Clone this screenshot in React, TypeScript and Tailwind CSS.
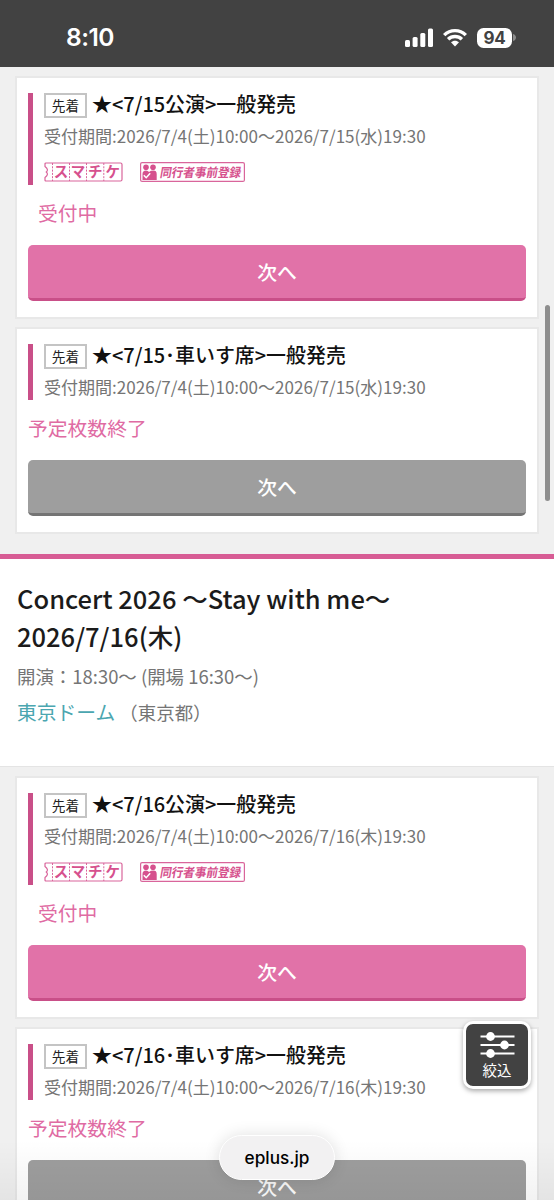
import React from "react";

type Sale = { title: string; period: string; open: boolean };

const july15: Sale[] = [
  { title: "★<7/15公演>一般発売", period: "受付期間:2026/7/4(土)10:00〜2026/7/15(水)19:30", open: true },
  { title: "★<7/15･車いす席>一般発売", period: "受付期間:2026/7/4(土)10:00〜2026/7/15(水)19:30", open: false },
];
const july16: Sale[] = [
  { title: "★<7/16公演>一般発売", period: "受付期間:2026/7/4(土)10:00〜2026/7/16(木)19:30", open: true },
  { title: "★<7/16･車いす席>一般発売", period: "受付期間:2026/7/4(土)10:00〜2026/7/16(木)19:30", open: false },
];

function StatusBar() {
  return (
    <header className="flex h-[67px] shrink-0 items-start justify-between bg-[#424242] pl-[66px] pr-[38px] pt-[24px] font-['Inter',sans-serif] text-white">
      <span className="text-[24.5px] font-semibold leading-[27px] tracking-[-0.5px]">8:10</span>
      <div className="flex h-[27px] items-center">
        <svg className="mr-[10px] h-[19px] w-[28px]" viewBox="0 0 28 19" fill="currentColor">
          <rect x="0" y="12" width="5" height="7" rx="1.5" />
          <rect x="7.6" y="9" width="5" height="10" rx="1.5" />
          <rect x="15.3" y="5" width="5" height="14" rx="1.5" />
          <rect x="23" y="0.5" width="5" height="18.5" rx="1.5" />
        </svg>
        <svg className="mr-[10px] h-[19px] w-[24px]" viewBox="0 0 24 19" fill="none" stroke="currentColor" strokeWidth="3.4">
          <path d="M1.2 7.1C7.2 1.1 16.8 1.1 22.8 7.1" />
          <path d="M5.1 11.3C9 7.5 15 7.5 18.9 11.3" />
          <path d="M8 14.2C10.2 12.1 13.8 12.1 16 14.2L12 18.4Z" fill="currentColor" stroke="none" />
        </svg>
        <span className="flex h-[20px] w-[35px] items-center justify-center rounded-[6.5px] bg-white text-[17px] font-bold leading-[20px] tracking-[-0.3px] text-[#424242]">94</span>
        <svg className="ml-[1px] h-[7px] w-[3px]" viewBox="0 0 3 7" fill="#8c8c8c"><path d="M0 0C4 1 4 6 0 7Z" /></svg>
      </div>
    </header>
  );
}

function TicketBadge() {
  return (
    <svg className="h-[20px] w-[79px] overflow-visible" viewBox="0 0 79 20" fill="none" stroke="#d9659b">
      <path d="M2 1H76.5Q78 1 78 2.5V17.5Q78 19 76.5 19H2Q1 19 1 18V15.5C4 13 4 11.5 2.3 10C4 8.5 4 7 1 4.5V2Q1 1 2 1Z" strokeWidth="1.2" />
      <path d="M8.5 1V19M25.5 1V19M42.5 1V19M59.8 1V19" strokeWidth="1" strokeDasharray="2 1.3" />
      <g fill="#d6518e" stroke="none" fontSize="14.5" fontWeight="700" fontFamily="'Noto Sans CJK JP', sans-serif" textAnchor="middle">
        <text x="17" y="14.9">ス</text>
        <text x="34" y="14.9">マ</text>
        <text x="51.3" y="14.9">チ</text>
        <text x="68.8" y="14.9">ケ</text>
      </g>
    </svg>
  );
}

function CompanionBadge() {
  return (
    <svg className="h-[20px] w-[105px] overflow-visible" viewBox="0 0 105 20" fill="#d6518e">
      <rect x="0.6" y="0.6" width="103.8" height="18.8" rx="1.5" fill="none" stroke="#d9659b" strokeWidth="1.2" />
      <circle cx="6" cy="5.2" r="2.8" />
      <circle cx="13" cy="5.2" r="2.8" />
      <path d="M2.5 18V12Q2.5 8.5 6 8.5Q8 8.5 9 10L11 8.8Q16.7 7.5 16.7 12V18Z" />
      <path d="M3.8 13.2L6.2 15.7L10.2 11.2" fill="none" stroke="white" strokeWidth="1.5" />
      <text x="22" y="14.6" transform="skewX(-10)" textLength="81" lengthAdjust="spacingAndGlyphs" fontSize="12.5" fontWeight="700" fontFamily="'Noto Sans CJK JP', sans-serif">同行者事前登録</text>
    </svg>
  );
}

function SaleCard({ title, period, open }: Sale) {
  return (
    <article className={`flex shrink-0 flex-col border-2 border-[#e8e8e8] bg-white px-[11px] pt-[15px] ${open ? "h-[243px]" : "h-[207px]"}`}>
      <div className={`border-l-[5px] border-[#c94f88] pl-[11px] ${open ? "h-[92px]" : "h-[56px]"}`}>
        <div className="flex h-[25px] items-start whitespace-nowrap">
          <span className="flex h-[25px] w-[43px] items-center justify-center border-2 border-[#c4c4c4] text-[13.7px] leading-none text-[#222]">先着</span>
          <h2 className="ml-[5px] text-[19.93px] font-medium leading-[21px] text-[#111]">{title}</h2>
        </div>
        <p className="mt-[6px] whitespace-nowrap text-[17.04px] leading-[24px] text-[#757575]">{period}</p>
        {open && (
          <div className="mt-[14px] flex gap-[17px]">
            <TicketBadge />
            <CompanionBadge />
          </div>
        )}
      </div>
      <p className={`mt-[14px] text-[19.8px] leading-[27px] text-[#df6ba3] ${open ? "pl-[10px]" : ""}`}>
        {open ? "受付中" : "予定枚数終了"}
      </p>
      <button className={`mt-[19px] h-[56px] w-full rounded-[5px] border-b-[3px] text-[19.8px] font-medium text-white ${open ? "border-[#c94f88] bg-[#e172a8]" : "border-[#747474] bg-[#9e9e9e]"}`}>
        次へ
      </button>
    </article>
  );
}

export default function App() {
  return (
    <div className="relative flex h-[1200px] w-[554px] flex-col overflow-hidden bg-[#f0f0f0] font-['Noto_Sans_CJK_JP',sans-serif]">
      <StatusBar />
      <section className="flex shrink-0 flex-col gap-[8px] px-[15px] pb-[20px] pt-[9px]">
        {july15.map((s) => <SaleCard key={s.title} {...s} />)}
      </section>
      <section className="h-[213px] shrink-0 border-b border-t-[5px] border-b-[#e4e4e4] border-t-[#d75c94] bg-white px-[17px] pt-[20px]">
        <h1 className="text-[25.5px] font-medium leading-[38px] text-[#1b1b1b]">Concert 2026 〜Stay with me〜<br />2026/7/16(木)</h1>
        <p className="mt-[8px] text-[18.46px] leading-[26px] text-[#757575]">開演：18:30〜 (開場 16:30〜)</p>
        <p className="mt-[9px] flex items-center text-[18.46px] leading-[28px] text-[#757575]">
          <a className="text-[19.8px] text-[#4ba6b0]">東京ドーム</a>
          <span className="ml-[4px]">（東京都）</span>
        </p>
      </section>
      <section className="flex shrink-0 flex-col gap-[8px] px-[15px] pt-[9px]">
        {july16.map((s) => <SaleCard key={s.title} {...s} />)}
      </section>

      <div className="absolute right-[4px] top-[305px] h-[196px] w-[5px] rounded-full bg-[#8e8e8e]" />
      <div className="absolute inset-x-0 bottom-0 h-[60px] bg-gradient-to-b from-transparent to-black/5" />
      <button className="absolute left-[463px] top-[1021px] flex h-[68px] w-[68px] flex-col items-center rounded-[10px] border-[3px] border-white bg-[#424242] pt-[8px] text-[14.5px] leading-[22px] text-white shadow-[0_2px_5px_rgba(0,0,0,0.35)]">
        <svg className="h-[27px] w-[35px] shrink-0" viewBox="0 0 35 27" stroke="white" strokeWidth="2.2" fill="white">
          <path d="M0.5 4.5H34.5M0.5 13H34.5M0.5 21.5H34.5" />
          <g stroke="none"><circle cx="10.5" cy="4.5" r="4.4" /><circle cx="24.5" cy="13" r="4.4" /><circle cx="10.5" cy="21.5" r="4.4" /></g>
        </svg>
        <span>絞込</span>
      </button>
      <div className="absolute left-[219px] top-[1135px] flex h-[45px] w-[116px] items-center justify-center rounded-full border-[1.5px] border-white bg-[#f2f1f2] pt-px font-['Inter',sans-serif] text-[17.2px] font-medium text-black shadow-[0_0_16px_rgba(0,0,0,0.12)]">
        eplus.jp
      </div>
    </div>
  );
}
